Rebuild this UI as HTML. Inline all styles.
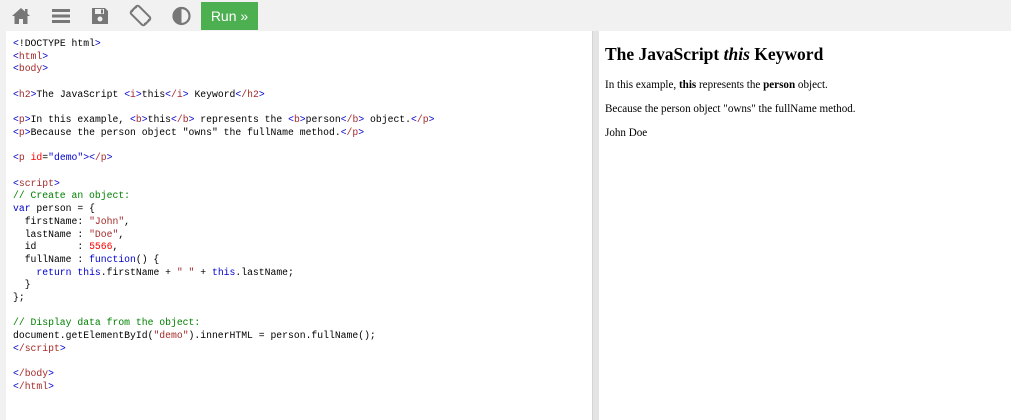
<!DOCTYPE html>
<html><head><style>
body{margin:0;width:1011px;height:420px;background:#f1f1f1;overflow:hidden;position:relative;font-family:"Liberation Sans",sans-serif}
#tb{position:absolute;left:0;top:0;width:1011px;height:31px;background:#f1f1f1}
.ic{position:absolute;top:6px}
#run{position:absolute;left:201px;top:2px;width:57px;height:28px;background:#4caf50;color:#fff;font-size:14px;line-height:28px;text-align:center}
#left{position:absolute;left:6px;top:31px;width:586px;height:389px;background:#fff;border-right:1px solid #d4d4d4}
#div{position:absolute;left:593px;top:31px;width:6px;height:389px;background:#e4e4e4}
#right{position:absolute;left:599px;top:31px;width:412px;height:389px;background:#fff}
pre{margin:0;position:absolute;left:7px;top:7px;font-family:"Liberation Mono",monospace;font-size:9.75px;line-height:12.7px;color:#000}
.t{color:mediumblue}.n{color:brown}.a{color:red}.v{color:mediumblue}
.k{color:mediumblue}.s{color:brown}.num{color:red}.c{color:green}
#out{position:absolute;left:6px;top:0;font-family:"Liberation Serif",serif;color:#000}
#out h2{font-size:17.5px;margin:13px 0 0;padding-bottom:2px;font-weight:bold}
#out p{font-size:11.1px;margin:12px 0 0}
</style></head><body>
<div id="tb">
<svg class="ic" style="left:11px" width="20" height="20" viewBox="0 0 20 20"><path d="M10 2 L1 10 L3.5 10 L3.5 18 L8 18 L8 13 L12 13 L12 18 L16.5 18 L16.5 10 L19 10 Z" fill="#777"/><rect x="14" y="3" width="2.5" height="5" fill="#777"/></svg>
<svg class="ic" style="left:51px" width="20" height="20" viewBox="0 0 20 20"><rect x="1" y="3" width="18" height="3" fill="#777"/><rect x="1" y="8.5" width="18" height="3" fill="#777"/><rect x="1" y="14" width="18" height="3" fill="#777"/></svg>
<svg class="ic" style="left:91px" width="18" height="20" viewBox="0 0 18 20"><path d="M1 2 H14 L17 5 V18 H1 Z" fill="#777"/><rect x="4" y="3" width="9" height="5" fill="#f1f1f1"/><rect x="10" y="3.5" width="2" height="4" fill="#777"/><circle cx="9" cy="13" r="2.5" fill="#f1f1f1"/></svg>
<svg class="ic" style="left:129px;top:4px" width="23" height="23" viewBox="0 0 23 23"><g transform="rotate(-45 11.5 11.5)"><rect x="6" y="2" width="11" height="19" rx="2" fill="none" stroke="#777" stroke-width="2"/></g><path d="M3 8 A9 9 0 0 1 8 3" fill="none" stroke="#777" stroke-width="1.5"/><path d="M20 15 A9 9 0 0 1 15 20" fill="none" stroke="#777" stroke-width="1.5"/></svg>
<svg class="ic" style="left:172px" width="19" height="20" viewBox="0 0 19 20"><circle cx="9.5" cy="10" r="8" fill="none" stroke="#777" stroke-width="2.2"/><path d="M9.5 2 A8 8 0 0 0 9.5 18 Z" fill="#777"/></svg>
<div id="run">Run »</div>
</div>
<div id="left"><pre><span class="t">&lt;</span>!DOCTYPE html<span class="t">&gt;</span>
<span class="t">&lt;</span><span class="n">html</span><span class="t">&gt;</span>
<span class="t">&lt;</span><span class="n">body</span><span class="t">&gt;</span>

<span class="t">&lt;</span><span class="n">h2</span><span class="t">&gt;</span>The JavaScript <span class="t">&lt;</span><span class="n">i</span><span class="t">&gt;</span>this<span class="t">&lt;</span><span class="n">/i</span><span class="t">&gt;</span> Keyword<span class="t">&lt;</span><span class="n">/h2</span><span class="t">&gt;</span>

<span class="t">&lt;</span><span class="n">p</span><span class="t">&gt;</span>In this example, <span class="t">&lt;</span><span class="n">b</span><span class="t">&gt;</span>this<span class="t">&lt;</span><span class="n">/b</span><span class="t">&gt;</span> represents the <span class="t">&lt;</span><span class="n">b</span><span class="t">&gt;</span>person<span class="t">&lt;</span><span class="n">/b</span><span class="t">&gt;</span> object.<span class="t">&lt;</span><span class="n">/p</span><span class="t">&gt;</span>
<span class="t">&lt;</span><span class="n">p</span><span class="t">&gt;</span>Because the person object "owns" the fullName method.<span class="t">&lt;</span><span class="n">/p</span><span class="t">&gt;</span>

<span class="t">&lt;</span><span class="n">p</span> <span class="a">id</span>=<span class="v">"demo"</span><span class="t">&gt;&lt;</span><span class="n">/p</span><span class="t">&gt;</span>

<span class="t">&lt;</span><span class="n">script</span><span class="t">&gt;</span>
<span class="c">// Create an object:</span>
<span class="k">var</span> person = {
  firstName: <span class="s">"John"</span>,
  lastName : <span class="s">"Doe"</span>,
  id       : <span class="num">5566</span>,
  fullName : <span class="k">function</span>() {
    <span class="k">return</span> <span class="k">this</span>.firstName + <span class="s">" "</span> + <span class="k">this</span>.lastName;
  }
};

<span class="c">// Display data from the object:</span>
document.getElementById(<span class="s">"demo"</span>).innerHTML = person.fullName();
<span class="t">&lt;</span><span class="n">/script</span><span class="t">&gt;</span>

<span class="t">&lt;</span><span class="n">/body</span><span class="t">&gt;</span>
<span class="t">&lt;</span><span class="n">/html</span><span class="t">&gt;</span></pre></div>
<div id="div"></div>
<div id="right"><div id="out">
<h2>The JavaScript <i>this</i> Keyword</h2>
<p>In this example, <b>this</b> represents the <b>person</b> object.</p>
<p>Because the person object "owns" the fullName method.</p>
<p>John Doe</p>
</div></div>
</body></html>
